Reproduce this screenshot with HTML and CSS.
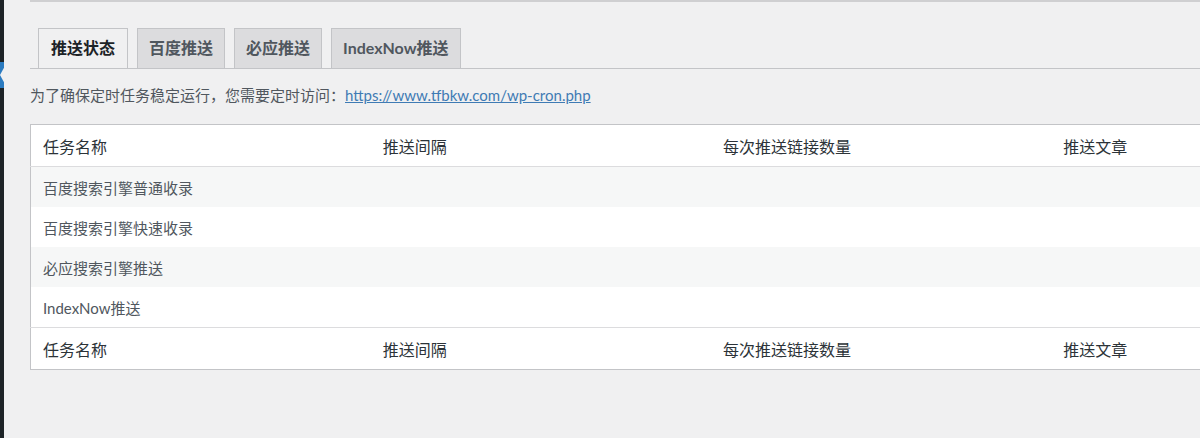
FILE: index.html
```html
<!DOCTYPE html>
<html lang="zh-CN">
<head>
    <meta charset="UTF-8">
    <meta name="viewport" content="width=device-width, initial-scale=1.0">
    <title>推送状态</title>
    <link rel="stylesheet" href="styles.css">
</head>
<body>
    <div class="admin">
        <aside class="sidebar">
            <svg class="menu-current" width="5" height="26" viewBox="0 0 5 26">
                <rect x="0" y="0" width="5" height="26" fill="#2b7bc0"/>
                <polygon points="5,4 0,13 5,22" fill="#f0f0f1"/>
            </svg>
        </aside>
        <main class="content">
            <div class="top-box"></div>

            <nav class="nav-tabs">
                <a class="nav-tab active" href="#">推送状态</a>
                <a class="nav-tab" href="#">百度推送</a>
                <a class="nav-tab" href="#">必应推送</a>
                <a class="nav-tab" href="#">IndexNow推送</a>
            </nav>

            <p class="notice">为了确保定时任务稳定运行，您需要定时访问：<a href="#">https://www.tfbkw.com/wp-cron.php</a></p>

            <table class="tasks">
                <thead>
                    <tr>
                        <th>任务名称</th>
                        <th>推送间隔</th>
                        <th>每次推送链接数量</th>
                        <th>推送文章</th>
                    </tr>
                </thead>
                <tbody>
                    <tr><td>百度搜索引擎普通收录</td><td></td><td></td><td></td></tr>
                    <tr><td>百度搜索引擎快速收录</td><td></td><td></td><td></td></tr>
                    <tr><td>必应搜索引擎推送</td><td></td><td></td><td></td></tr>
                    <tr><td>IndexNow推送</td><td></td><td></td><td></td></tr>
                </tbody>
                <tfoot>
                    <tr>
                        <th>任务名称</th>
                        <th>推送间隔</th>
                        <th>每次推送链接数量</th>
                        <th>推送文章</th>
                    </tr>
                </tfoot>
            </table>
        </main>
    </div>
</body>
</html>
```

FILE: styles.css
```css
body {
    margin: 0;
    padding: 0;
    background-color: #f0f0f1;
    font-family: Lato, "Noto Sans CJK SC", sans-serif;
    color: #50575e;
    overflow: hidden;
}
.admin {
    display: flex;
    min-height: 438px;
}
.sidebar {
    width: 4px;
    flex-shrink: 0;
    background: #1d2327;
    overflow: hidden;
}
.menu-current {
    display: block;
    margin-top: 62px;
}
.content {
    flex: 1;
    padding-left: 26px;
    overflow: hidden;
}
.top-box {
    height: 0;
    border-bottom: 2px solid #cfcfd1;
}
.nav-tabs {
    display: flex;
    margin-top: 26px;
    border-bottom: 1px solid #c3c4c7;
    height: 40px;
}
.nav-tab {
    margin-left: 8px;
    padding: 4px 11px 5px;
    line-height: 30px;
    font-size: 16px;
    font-weight: bold;
    color: #50575e;
    background: #dcdcde;
    border: 1px solid #c3c4c7;
    border-bottom: none;
    text-decoration: none;
}
.nav-tab + .nav-tab {
    margin-left: 9px;
}
.nav-tab.active {
    color: #1d2327;
    background: #f0f0f1;
    height: 40px;
    box-sizing: border-box;
    margin-bottom: -1px;
    padding: 4px 12px 5px;
}
.notice {
    margin: 14px 0 0;
    font-size: 15px;
    line-height: 24px;
    color: #50575e;
}
.notice a {
    color: #3f7bb4;
}
.tasks {
    margin-top: 17px;
    width: 1362px;
    border-collapse: collapse;
    background: #ffffff;
    border: 1px solid #c3c4c7;
    table-layout: fixed;
}
.tasks th {
    text-align: left;
    font-weight: normal;
    font-size: 16px;
    color: #2c3338;
    padding: 0 12px;
    height: 41px;
}
.tasks thead th {
    border-bottom: 1px solid #dcdcde;
}
.tasks tfoot th {
    border-top: 1px solid #dcdcde;
}
.tasks td {
    font-size: 15px;
    color: #50575e;
    padding: 0 12px;
    height: 40px;
}
.tasks tbody tr:nth-child(odd) {
    background: #f6f7f7;
}
```
